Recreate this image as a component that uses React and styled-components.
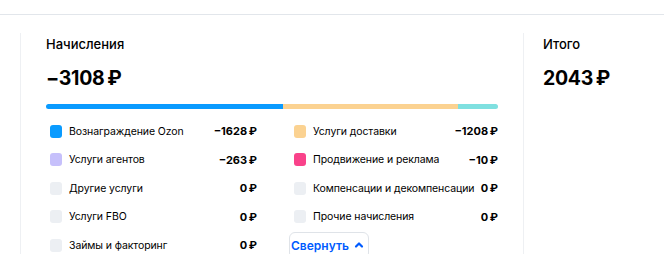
import styled, { createGlobalStyle } from "styled-components";

const GlobalStyle = createGlobalStyle`
  body {
    margin: 0;
    background: #ffffff;
    font-family: Inter, "Noto Sans", sans-serif;
    color: #000000;
  }
`;

const left = [
  { label: "Вознаграждение Ozon", value: "−1628\u2009₽", color: "#0a9bff" },
  { label: "Услуги агентов", value: "−263\u2009₽", color: "#c6c0fb" },
  { label: "Другие услуги", value: "0\u2009₽", color: "#eceff3" },
  { label: "Услуги FBO", value: "0\u2009₽", color: "#eceff3" },
  { label: "Займы и факторинг", value: "0\u2009₽", color: "#eceff3" },
];

const right = [
  { label: "Услуги доставки", value: "−1208\u2009₽", color: "#fbd291" },
  { label: "Продвижение и реклама", value: "−10\u2009₽", color: "#f9428a" },
  { label: "Компенсации и декомпенсации", value: "0\u2009₽", color: "#eceff3" },
  { label: "Прочие начисления", value: "0\u2009₽", color: "#eceff3" },
];

const bar = [
  { width: 52.4, color: "#0a9bff" },
  { width: 38.8, color: "#fbd291" },
  { width: 8.8, color: "#7fe0e0" },
];

const Row = ({ item }) => (
  <Item>
    <Swatch $color={item.color} />
    <Label>{item.label}</Label>
    <Value>{item.value}</Value>
  </Item>
);

const App = () => {
  return (
    <>
      <GlobalStyle />
      <TopLine />
      <Wrapper>
        <Accruals>
          <Title>Начисления</Title>
          <Amount>−3108{"\u2009"}₽</Amount>
          <Bar>
            {bar.map((s, i) => (
              <Segment key={i} $color={s.color} style={{ width: `${s.width}%` }} />
            ))}
          </Bar>
          <Columns>
            <Column>
              {left.map((item) => (
                <Row key={item.label} item={item} />
              ))}
            </Column>
            <Column>
              {right.map((item) => (
                <Row key={item.label} item={item} />
              ))}
              <Item>
                <Collapse>
                  Свернуть
                  <svg width="10" height="10" viewBox="0 0 10 10">
                    <path
                      d="M2 6.5 L5 3.5 L8 6.5"
                      fill="none"
                      stroke="#005bff"
                      strokeWidth="2.2"
                      strokeLinecap="round"
                      strokeLinejoin="round"
                    />
                  </svg>
                </Collapse>
              </Item>
            </Column>
          </Columns>
        </Accruals>
        <Total>
          <Title>Итого</Title>
          <Amount>2043{"\u2009"}₽</Amount>
        </Total>
      </Wrapper>
    </>
  );
};

const TopLine = styled.div`
  height: 14px;
  border-bottom: 1px solid #e2e6eb;
`;

const Wrapper = styled.div`
  display: flex;
  margin-top: 18px;
  margin-left: 20px;
`;

const Accruals = styled.section`
  width: 452px;
  padding: 3px 25px 0 25px;
  border-left: 1px solid #eef0f3;
  border-right: 1px solid #eef0f3;
`;

const Total = styled.section`
  padding: 3px 0 0 19px;
`;

const Title = styled.div`
  font-size: 13px;
  line-height: 16px;
  font-weight: 500;
`;

const Amount = styled.div`
  margin-top: 14px;
  font-size: 19.5px;
  line-height: 24px;
  font-weight: 700;
  letter-spacing: -0.3px;
`;

const Bar = styled.div`
  display: flex;
  height: 5px;
  margin-top: 14px;
  border-radius: 3px;
  overflow: hidden;
`;

const Segment = styled.div`
  height: 100%;
  background: ${(p) => p.$color};
`;

const Columns = styled.div`
  display: grid;
  grid-template-columns: 211px 208px;
  column-gap: 33px;
  margin-top: 8px;
`;

const Column = styled.div`
  display: flex;
  flex-direction: column;
`;

const Item = styled.div`
  display: flex;
  align-items: center;
  height: 28.5px;
`;

const Swatch = styled.span`
  flex: none;
  width: 12px;
  height: 13px;
  margin: 0 7px 0 4px;
  border-radius: 3px;
  background: ${(p) => p.$color};
`;

const Label = styled.span`
  flex: 1;
  font-size: 10.5px;
  letter-spacing: -0.1px;
  white-space: nowrap;
`;

const Value = styled.span`
  font-size: 11px;
  font-weight: 700;
  white-space: nowrap;
`;

const Collapse = styled.button`
  display: flex;
  align-items: center;
  gap: 5px;
  margin-left: -1px;
  padding: 5px 4px 5px 1px;
  border: 1px solid #dfe3e8;
  border-radius: 6px;
  background: #ffffff;
  font-family: inherit;
  font-size: 12px;
  font-weight: 600;
  color: #005bff;
  cursor: pointer;
`;

export default App;
